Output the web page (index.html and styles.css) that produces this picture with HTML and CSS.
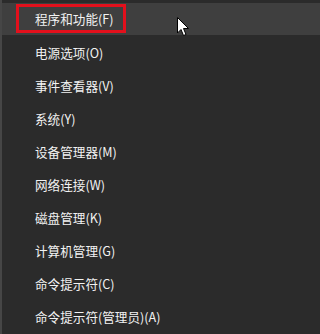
FILE: index.html
```html
<!DOCTYPE html>
<html lang="zh-CN">
<head>
<meta charset="utf-8">
<link rel="stylesheet" href="styles.css">
</head>
<body>
<div class="menu">
  <ul class="items">
    <li class="item active">程序和功能(F)</li>
    <li class="item">电源选项(O)</li>
    <li class="item">事件查看器(V)</li>
    <li class="item">系统(Y)</li>
    <li class="item">设备管理器(M)</li>
    <li class="item">网络连接(W)</li>
    <li class="item">磁盘管理(K)</li>
    <li class="item">计算机管理(G)</li>
    <li class="item">命令提示符(C)</li>
    <li class="item">命令提示符(管理员)(A)</li>
  </ul>
  <div class="mark"></div>
  <svg class="cursor" width="13" height="20" viewBox="0 0 13 20">
    <path d="M0.5 0.5 L0.5 16 L4 12.5 L6.5 18.5 L9 17.5 L6.5 11.5 L11.5 11.5 Z" fill="#fff" stroke="#000" stroke-width="1"/>
  </svg>
</div>
</body>
</html>
```
FILE: styles.css
```css
html, body {
  margin: 0;
  padding: 0;
  background: #2b2b2b;
}
.menu {
  position: relative;
  min-height: 334px;
  box-sizing: border-box;
  border-left: 2px solid #464646;
  background: #2b2b2b;
  overflow: hidden;
  font-family: "Noto Sans CJK SC", "Noto Sans", sans-serif;
}
.items {
  list-style: none;
  margin: 0;
  padding: 3px 0 0 0;
}
.item {
  height: 33px;
  line-height: 33px;
  padding-left: 33px;
  font-size: 12.6px;
  color: #f2f2f2;
  white-space: nowrap;
}
.item.active {
  background: #3f3f3f;
  height: 32px;
  line-height: 32px;
  margin-bottom: 1px;
}
.mark {
  position: absolute;
  left: 14px;
  top: 4px;
  width: 104px;
  height: 23px;
  border: 3px solid #e3101c;
}
.cursor {
  position: absolute;
  left: 175px;
  top: 17px;
}
```
